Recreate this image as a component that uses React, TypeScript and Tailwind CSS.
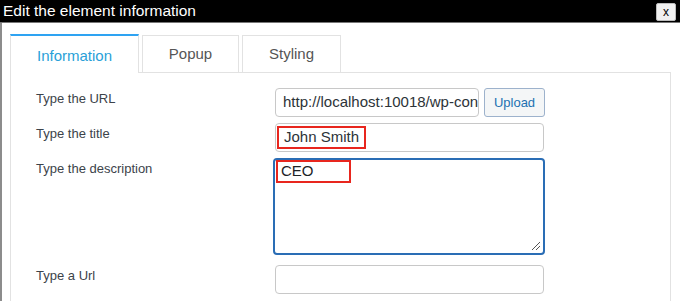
import React from 'react';

// ─── Form rows ──────────────────────────────────────────────
const labelCls = 'w-[239px] shrink-0 pt-[3px] text-[13px] leading-[16px] text-[#3c434a]';
const inputCls = 'h-[29px] rounded-[4px] border border-[#c8c8c8] bg-white flex items-center overflow-hidden text-[15px] text-[#2c3338]';

function ResizeGrip() {
    return (
        <svg width="10" height="10" viewBox="0 0 10 10" className="absolute right-[2px] bottom-[2px]">
            <line x1="1" y1="9" x2="9" y2="1" stroke="#555" strokeWidth="1" />
            <line x1="5" y1="9" x2="9" y2="5" stroke="#555" strokeWidth="1" />
        </svg>
    );
}

export default function App() {
    return (
        <div
            className="w-[680px] h-[301px] overflow-hidden bg-white flex flex-col"
            style={{ fontFamily: '"Liberation Sans", Arial, sans-serif' }}
        >
            {/* Title bar */}
            <div className="h-[23px] shrink-0 bg-black border-b border-[#777] flex items-center justify-between pl-[3px] pr-[4px]">
                <span className="text-white text-[15.5px] leading-none">Edit the element information</span>
                <button className="w-[20px] h-[18px] mt-[1px] rounded-[2px] border border-[#bbb] bg-[#f0f0f0] text-[12px] leading-none text-black flex items-center justify-center">
                    x
                </button>
            </div>

            {/* Body */}
            <div className="flex-1 border-l-2 border-[#8c8c8c] pl-[8px] pr-[9px] pt-[11px] flex flex-col">
                {/* Tabs */}
                <div className="flex gap-[3px] items-end relative z-10 -mb-px">
                    <div className="w-[129px] h-[39px] bg-white border-t-2 border-t-[#2ea3f2] border-x border-x-[#e2e2e2] flex justify-center pt-[9px] text-[15px] text-[#2a9fd8]">
                        Information
                    </div>
                    <div className="w-[97px] h-[38px] bg-white border border-[#e2e2e2] flex justify-center pt-[7px] text-[15px] text-[#555]">
                        Popup
                    </div>
                    <div className="w-[99px] h-[38px] bg-white border border-[#e2e2e2] flex justify-center pt-[7px] text-[15px] text-[#555]">
                        Styling
                    </div>
                </div>

                {/* Panel */}
                <div className="flex-1 border border-b-0 border-[#e2e2e2] pl-[25px] pt-[15px] flex flex-col">
                    {/* URL */}
                    <div className="flex">
                        <div className={labelCls}>Type the URL</div>
                        <div className="flex gap-[5px]">
                            <div className={inputCls + ' w-[204px] pl-[7px] whitespace-nowrap text-[14.5px]'}>
                                http://localhost:10018/wp-con
                            </div>
                            <button className="w-[61px] h-[29px] rounded-[3px] border border-[#9db2cc] bg-[#f4f6f7] text-[13px] text-[#2271b1]">
                                Upload
                            </button>
                        </div>
                    </div>

                    {/* Title */}
                    <div className="flex mt-[6px]">
                        <div className={labelCls}>Type the title</div>
                        <div className={inputCls + ' w-[269px] pl-[1px]'}>
                            <span className="w-[89px] h-[23px] border-2 border-[#e8261e] pl-[5px] flex items-center">
                                John Smith
                            </span>
                        </div>
                    </div>

                    {/* Description */}
                    <div className="flex mt-[6px]">
                        <div className="w-[237px] shrink-0 pt-[3px] text-[13px] leading-[16px] text-[#3c434a]">
                            Type the description
                        </div>
                        <div className="relative w-[272px] h-[97px] rounded-[4px] border-2 border-[#2a6db5] bg-white">
                            <span className="ml-px w-[75px] h-[23px] border-2 border-[#e8261e] pl-[3px] flex items-center text-[15px] text-[#1d2327]">
                                CEO
                            </span>
                            <ResizeGrip />
                        </div>
                    </div>

                    {/* Url */}
                    <div className="flex mt-[10px]">
                        <div className={labelCls}>Type a Url</div>
                        <div className={inputCls + ' w-[269px]'} />
                    </div>
                </div>
            </div>
        </div>
    );
}
